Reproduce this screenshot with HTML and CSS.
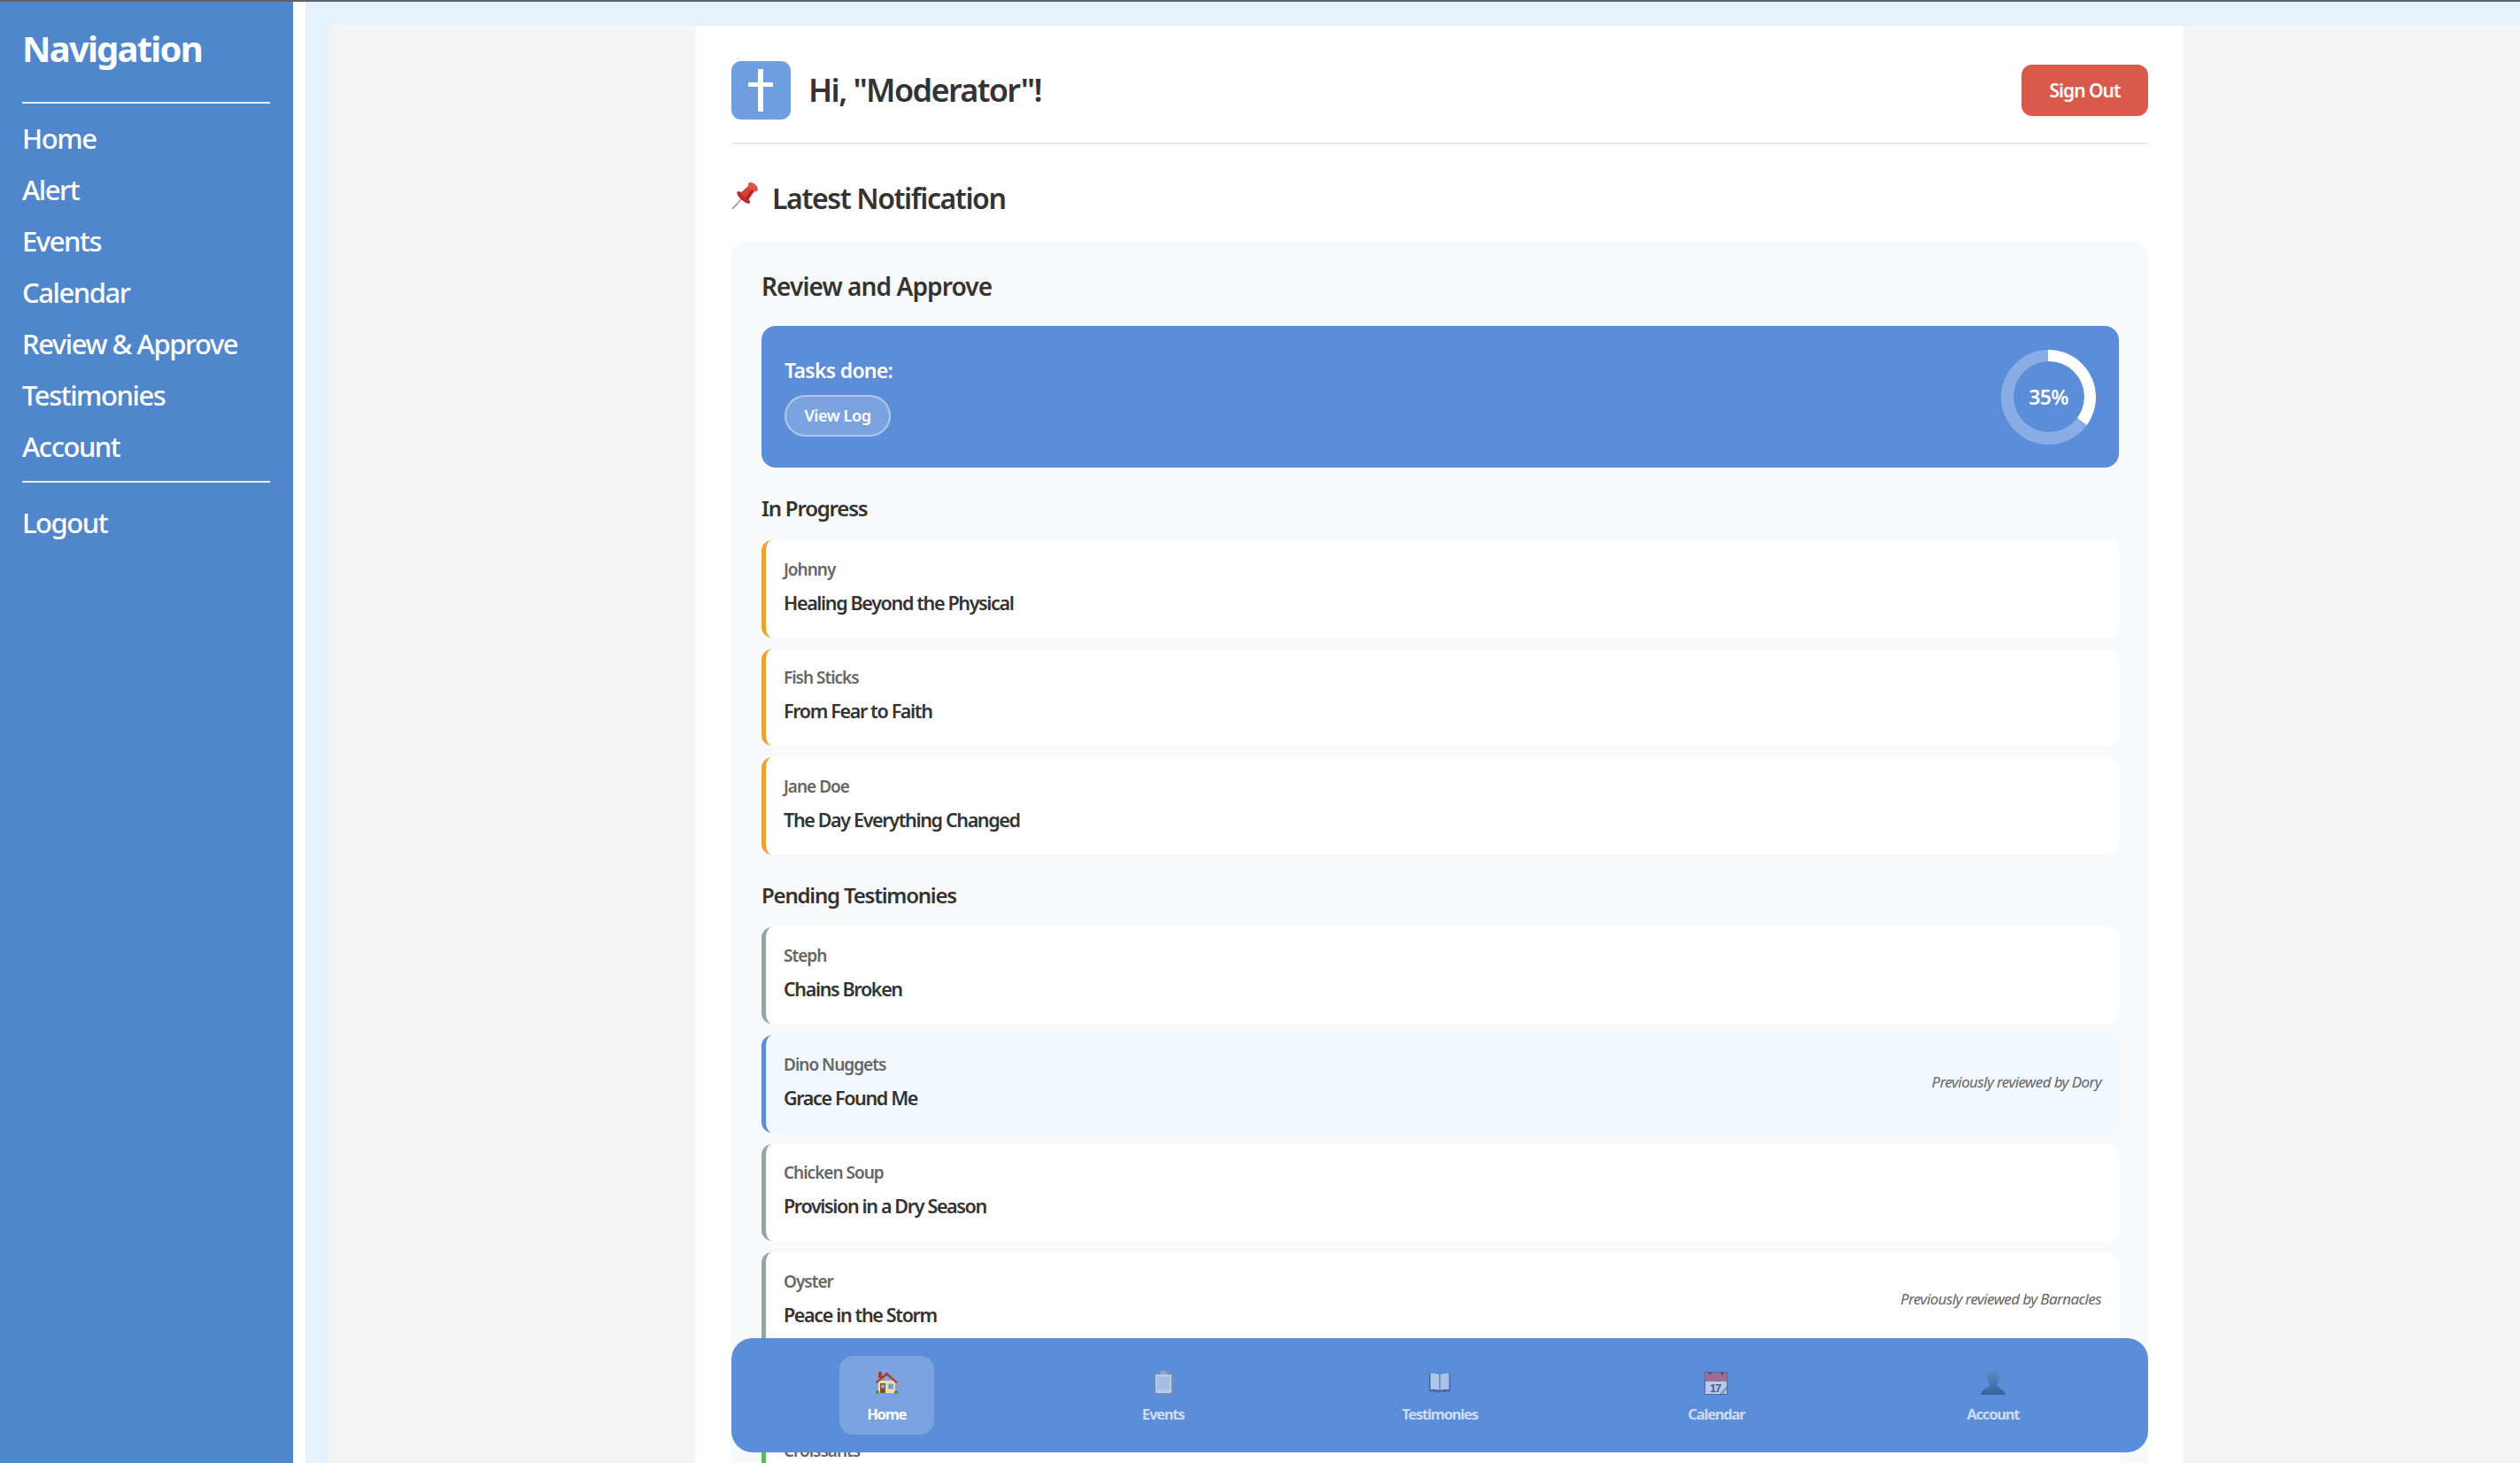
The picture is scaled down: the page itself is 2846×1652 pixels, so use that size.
FILE: index.html
```html
<!DOCTYPE html>
<html lang="en">

<head>
    <meta charset="UTF-8">
    <meta name="viewport" content="width=device-width, initial-scale=1.0">
    <title>Moderator Home</title>
    <link rel="stylesheet" href="styles.css">
</head>

<body>
    <div class="top-strip"></div>
    <div class="layout">
        <aside class="sidebar">
            <h2 class="sidebar-title">Navigation</h2>
            <hr class="sidebar-rule first-rule">
            <nav class="sidebar-links">
                <a href="#">Home</a>
                <a href="#">Alert</a>
                <a href="#">Events</a>
                <a href="#">Calendar</a>
                <a href="#">Review &amp; Approve</a>
                <a href="#">Testimonies</a>
                <a href="#">Account</a>
            </nav>
            <hr class="sidebar-rule">
            <nav class="sidebar-links logout-links">
                <a href="#">Logout</a>
            </nav>
        </aside>

        <div class="main-area">
            <div class="gray-area">
                <main class="card">
                    <header class="page-header">
                        <div class="logo">
                            <svg width="67" height="66" viewBox="0 0 67 66">
                                <rect x="30" y="9" width="6" height="48" fill="#fff" />
                                <rect x="19" y="24" width="28" height="5" fill="#fff" />
                            </svg>
                        </div>
                        <h1 class="greeting">Hi, "Moderator"!</h1>
                        <button class="sign-out">Sign Out</button>
                    </header>

                    <h2 class="latest-title">
                        <svg class="pin" width="31" height="32" viewBox="0 0 31 32">
                            <line x1="1" y1="31" x2="13" y2="18" stroke="#8b97a6" stroke-width="1.6" />
                            <g transform="translate(19 12) rotate(42)">
                                <ellipse cx="0" cy="8" rx="9.5" ry="3.4" fill="#b92c27" />
                                <path d="M-4.5 -6 L4.5 -6 L6 7 L-6 7 Z" fill="#d8403a" />
                                <ellipse cx="0" cy="-8" rx="6.6" ry="3.8" fill="#e0524a" />
                                <path d="M1 -5 L4 -5 L5 7 L2 7 Z" fill="#a92723" />
                            </g>
                        </svg>
                        <span>Latest Notification</span>
                    </h2>

                    <section class="panel">
                        <h3 class="panel-title">Review and Approve</h3>

                        <div class="banner">
                            <div>
                                <div class="banner-label">Tasks done:</div>
                                <button class="view-log">View Log</button>
                            </div>
                            <div class="ring">
                                <div class="ring-inner">35%</div>
                            </div>
                        </div>

                        <h4 class="group-title">In Progress</h4>
                        <div class="rows">
                            <div class="row row-progress">
                                <div>
                                    <div class="row-name">Johnny</div>
                                    <div class="row-title">Healing Beyond the Physical</div>
                                </div>
                            </div>
                            <div class="row row-progress">
                                <div>
                                    <div class="row-name">Fish Sticks</div>
                                    <div class="row-title">From Fear to Faith</div>
                                </div>
                            </div>
                            <div class="row row-progress">
                                <div>
                                    <div class="row-name">Jane Doe</div>
                                    <div class="row-title">The Day Everything Changed</div>
                                </div>
                            </div>
                        </div>

                        <h4 class="group-title">Pending Testimonies</h4>
                        <div class="rows">
                            <div class="row row-pending">
                                <div>
                                    <div class="row-name">Steph</div>
                                    <div class="row-title">Chains Broken</div>
                                </div>
                            </div>
                            <div class="row row-returned">
                                <div>
                                    <div class="row-name">Dino Nuggets</div>
                                    <div class="row-title">Grace Found Me</div>
                                </div>
                                <div class="row-note">Previously reviewed by Dory</div>
                            </div>
                            <div class="row row-pending">
                                <div>
                                    <div class="row-name">Chicken Soup</div>
                                    <div class="row-title">Provision in a Dry Season</div>
                                </div>
                            </div>
                            <div class="row row-pending">
                                <div>
                                    <div class="row-name">Oyster</div>
                                    <div class="row-title">Peace in the Storm</div>
                                </div>
                                <div class="row-note">Previously reviewed by Barnacles</div>
                            </div>
                        </div>

                        <h4 class="group-title">Approved</h4>
                        <div class="rows">
                            <div class="row row-approved">
                                <div>
                                    <div class="row-name">Croissants</div>
                                    <div class="row-title">&nbsp;</div>
                                </div>
                            </div>
                        </div>
                    </section>
                </main>
            </div>
        </div>
    </div>

    <nav class="bottom-nav">
        <a href="#" class="tab active">
            <svg class="tab-icon" width="28" height="28" viewBox="0 0 28 28">
                <rect x="5" y="2" width="4" height="7" fill="#a6402e" />
                <rect x="5" y="12" width="19" height="14" fill="#f3dcae" />
                <path d="M1.500 14 L14.500 2.500 L27 14 L25 15 L14.500 6 L3.500 15 Z" fill="#b23a2a" />
                <rect x="7" y="15" width="6" height="11" fill="#8a4a25" />
                <rect x="8" y="16.500" width="4" height="4" fill="#86b3d6" />
                <rect x="16" y="15.500" width="6" height="6" fill="#6fa4d4" />
                <rect x="2" y="23.500" width="4" height="3" fill="#5c8a2e" />
                <rect x="23" y="23.500" width="4" height="3" fill="#5c8a2e" />
            </svg>
            <span>Home</span>
        </a>
        <a href="#" class="tab">
            <svg class="tab-icon" width="28" height="28" viewBox="0 0 28 28">
                <rect x="3" y="3" width="22" height="25" rx="1.500" fill="#8a8f98" />
                <rect x="5" y="5" width="18" height="21" fill="#eef3f8" />
                <rect x="7" y="8" width="14" height="14" fill="#d5dde8" />
                <rect x="10" y="1" width="8" height="4" rx="2" fill="#b5bcc6" />
            </svg>
            <span>Events</span>
        </a>
        <a href="#" class="tab">
            <svg class="tab-icon" width="28" height="28" viewBox="0 0 28 28">
                <path d="M2 5 L14 6 L26 5 L26 24 L14 25 L2 24 Z" fill="#2d4f7c" />
                <path d="M3.500 4 Q9 3 13.500 5.500 L13.500 23 Q9 21 3.500 22 Z" fill="#eaf0f6" />
                <path d="M24.500 4 Q19 3 14.500 5.500 L14.500 23 Q19 21 24.500 22 Z" fill="#dfe7f0" />
            </svg>
            <span>Testimonies</span>
        </a>
        <a href="#" class="tab">
            <svg class="tab-icon" width="28" height="28" viewBox="0 0 28 28">
                <rect x="1" y="2" width="26" height="26" rx="1" fill="#4a5568" />
                <rect x="2" y="3" width="24" height="10" fill="#d0566a" />
                <rect x="2" y="13" width="24" height="14" fill="#f4f6fa" />
                <circle cx="7" cy="4" r="1.500" fill="#1f2937" />
                <circle cx="21" cy="4" r="1.500" fill="#1f2937" />
                <text x="13" y="25" class="cal-day">17</text>
                <path d="M18 27 L26 18 L26 22 L22 27 Z" fill="#9aa3b0" />
            </svg>
            <span>Calendar</span>
        </a>
        <a href="#" class="tab">
            <svg class="tab-icon" width="28" height="28" viewBox="0 0 28 28">
                <defs>
                    <linearGradient id="personFill" x1="0" y1="0" x2="0" y2="1">
                        <stop offset="0" stop-color="#5b8cb8" />
                        <stop offset="1" stop-color="#1f4a78" />
                    </linearGradient>
                </defs>
                <path d="M14 0 C19 0 21 4 20.500 9 C20 13 18 15 18 17 C18 20 27 21 28 28 L0 28 C1 21 10 20 10 17 C10 15 8 13 7.500 9 C7 4 9 0 14 0 Z" fill="url(#personFill)" />
            </svg>
            <span>Account</span>
        </a>
    </nav>
</body>

</html>
```

FILE: styles.css
```css
* {
    box-sizing: border-box;
}

body {
    font-family: "Noto Sans", sans-serif;
    margin: 0;
    padding: 0;
    height: 1652px;
    overflow: hidden;
    background-color: #fff;
    color: #333;
}

h1, h2, h3, h4 {
    margin: 0;
}

a {
    text-decoration: none;
}

button {
    font-family: inherit;
    cursor: pointer;
    border: none;
}

.top-strip {
    height: 2px;
    background-color: #5f6166;
}

.layout {
    display: flex;
    height: 1650px;
}

/* sidebar */
.sidebar {
    width: 331px;
    flex-shrink: 0;
    margin-right: 14px;
    padding: 25px 26px 0 25px;
    background-color: #5087cc;
    color: #fff;
}

.sidebar-title {
    font-size: 40px;
    line-height: 56px;
    font-weight: 700;
    letter-spacing: -1.8px;
}

.sidebar-rule {
    margin: 0;
    border: none;
    height: 2px;
    background-color: #e4edf8;
}

.first-rule {
    margin-top: 32px;
}

.sidebar-links {
    display: flex;
    flex-direction: column;
    padding-top: 10px;
    padding-bottom: 10px;
}

.sidebar-links a {
    height: 58px;
    line-height: 58px;
    font-size: 31px;
    font-weight: 500;
    color: #fff;
    letter-spacing: -1.45px;
}

.logout-links {
    padding-top: 16px;
}

/* page */
.main-area {
    flex: 1;
    padding: 27px 0 0 26px;
    background-color: #e6f1fe;
}

.gray-area {
    height: 100%;
    padding-left: 415px;
    background-color: #f4f4f4;
}

.card {
    width: 1680px;
    height: 100%;
    padding: 40px 40px 0;
    background-color: #fff;
}

.page-header {
    display: flex;
    align-items: center;
    height: 94px;
    padding-bottom: 27px;
    border-bottom: 2px solid #e6e8f0;
}

.logo {
    display: flex;
    width: 67px;
    height: 66px;
    border-radius: 11px;
    background-color: #6f9ee0;
}

.greeting {
    margin-left: 20px;
    font-size: 36px;
    font-weight: 600;
    letter-spacing: -1.6px;
}

.sign-out {
    margin-left: auto;
    width: 143px;
    height: 58px;
    border-radius: 12px;
    background-color: #d9594a;
    color: #fff;
    font-size: 21px;
    font-weight: 600;
    letter-spacing: -1px;
}

.latest-title {
    display: flex;
    align-items: center;
    height: 109px;
    padding-top: 12px;
    font-size: 32px;
    font-weight: 600;
    letter-spacing: -1.4px;
}

.pin {
    margin-right: 15px;
    margin-top: -5px;
}

.panel {
    height: 1400px;
    padding: 32px 33px 0 34px;
    border-radius: 18px;
    background-color: #f8f9fb;
}

.panel-title {
    height: 64px;
    line-height: 38px;
    font-size: 28px;
    font-weight: 600;
    letter-spacing: -0.9px;
}

.banner {
    display: flex;
    align-items: center;
    justify-content: space-between;
    height: 160px;
    padding: 0 26px 0 26px;
    border-radius: 16px;
    background-color: #5b8dd9;
    color: #fff;
}

.banner-label {
    font-size: 23px;
    font-weight: 600;
    line-height: 32px;
    letter-spacing: -0.7px;
    margin-top: -2px;
}

.view-log {
    display: block;
    margin-top: 12px;
    width: 120px;
    height: 47px;
    border: 2px solid rgba(255, 255, 255, 0.4);
    border-radius: 24px;
    background-color: rgba(255, 255, 255, 0.2);
    color: #fff;
    font-size: 18px;
    font-weight: 600;
    letter-spacing: -0.4px;
}

.ring {
    display: flex;
    align-items: center;
    justify-content: center;
    width: 107px;
    height: 107px;
    border-radius: 50%;
    background: conic-gradient(#fff 0 35%, #8badE6 35% 100%);
}

.ring-inner {
    width: 80px;
    height: 80px;
    border-radius: 50%;
    background-color: #5b8dd9;
    font-size: 23px;
    font-weight: 600;
    line-height: 80px;
    text-align: center;
    letter-spacing: -0.7px;
}

.group-title {
    display: flex;
    align-items: center;
    height: 82px;
    padding-top: 9px;
    font-size: 24px;
    font-weight: 600;
    letter-spacing: -1.2px;
}

.rows {
    display: flex;
    flex-direction: column;
    gap: 13px;
}

.row {
    display: flex;
    align-items: center;
    justify-content: space-between;
    height: 109.5px;
    padding: 0 20px 5px;
    border-left: 5px solid #95a5a6;
    border-radius: 12px;
    background-color: #fff;
}

.row-progress {
    border-left-color: #f0a030;
}

.row-returned {
    border-left-color: #5b8dd9;
    background-color: #f1f8ff;
}

.row-approved {
    border-left-color: #5cb85c;
}

.row-name {
    margin-bottom: 9px;
    font-size: 19px;
    line-height: 28px;
    font-weight: 600;
    color: #666;
    letter-spacing: -1px;
}

.row-title {
    font-size: 21.5px;
    line-height: 30px;
    font-weight: 600;
    letter-spacing: -1.35px;
}

.row-note {
    font-size: 17px;
    font-style: italic;
    color: #666;
    letter-spacing: -0.6px;
}

/* bottom tabs */
.bottom-nav {
    position: fixed;
    left: 826px;
    top: 1511px;
    width: 1600px;
    height: 129px;
    padding: 20px 19px 0;
    display: grid;
    grid-template-columns: repeat(5, 1fr);
    justify-items: center;
    align-items: start;
    border-radius: 24px;
    background-color: #5b8dd9;
}

.tab {
    display: flex;
    flex-direction: column;
    align-items: center;
    padding: 16px 33px 0;
    height: 89px;
    border-radius: 16px;
    color: rgba(255, 255, 255, 0.7);
    font-size: 16.5px;
    font-weight: 700;
    letter-spacing: -1.2px;
}

.tab span {
    margin-top: 10px;
}

.tab-icon {
    opacity: 0.6;
}

.tab.active {
    width: 107px;
    background-color: rgba(255, 255, 255, 0.2);
    color: #fff;
}

.tab.active .tab-icon {
    opacity: 1;
}

.cal-day {
    font-family: "Liberation Sans", sans-serif;
    font-size: 13px;
    text-anchor: middle;
    fill: #374151;
}
```
